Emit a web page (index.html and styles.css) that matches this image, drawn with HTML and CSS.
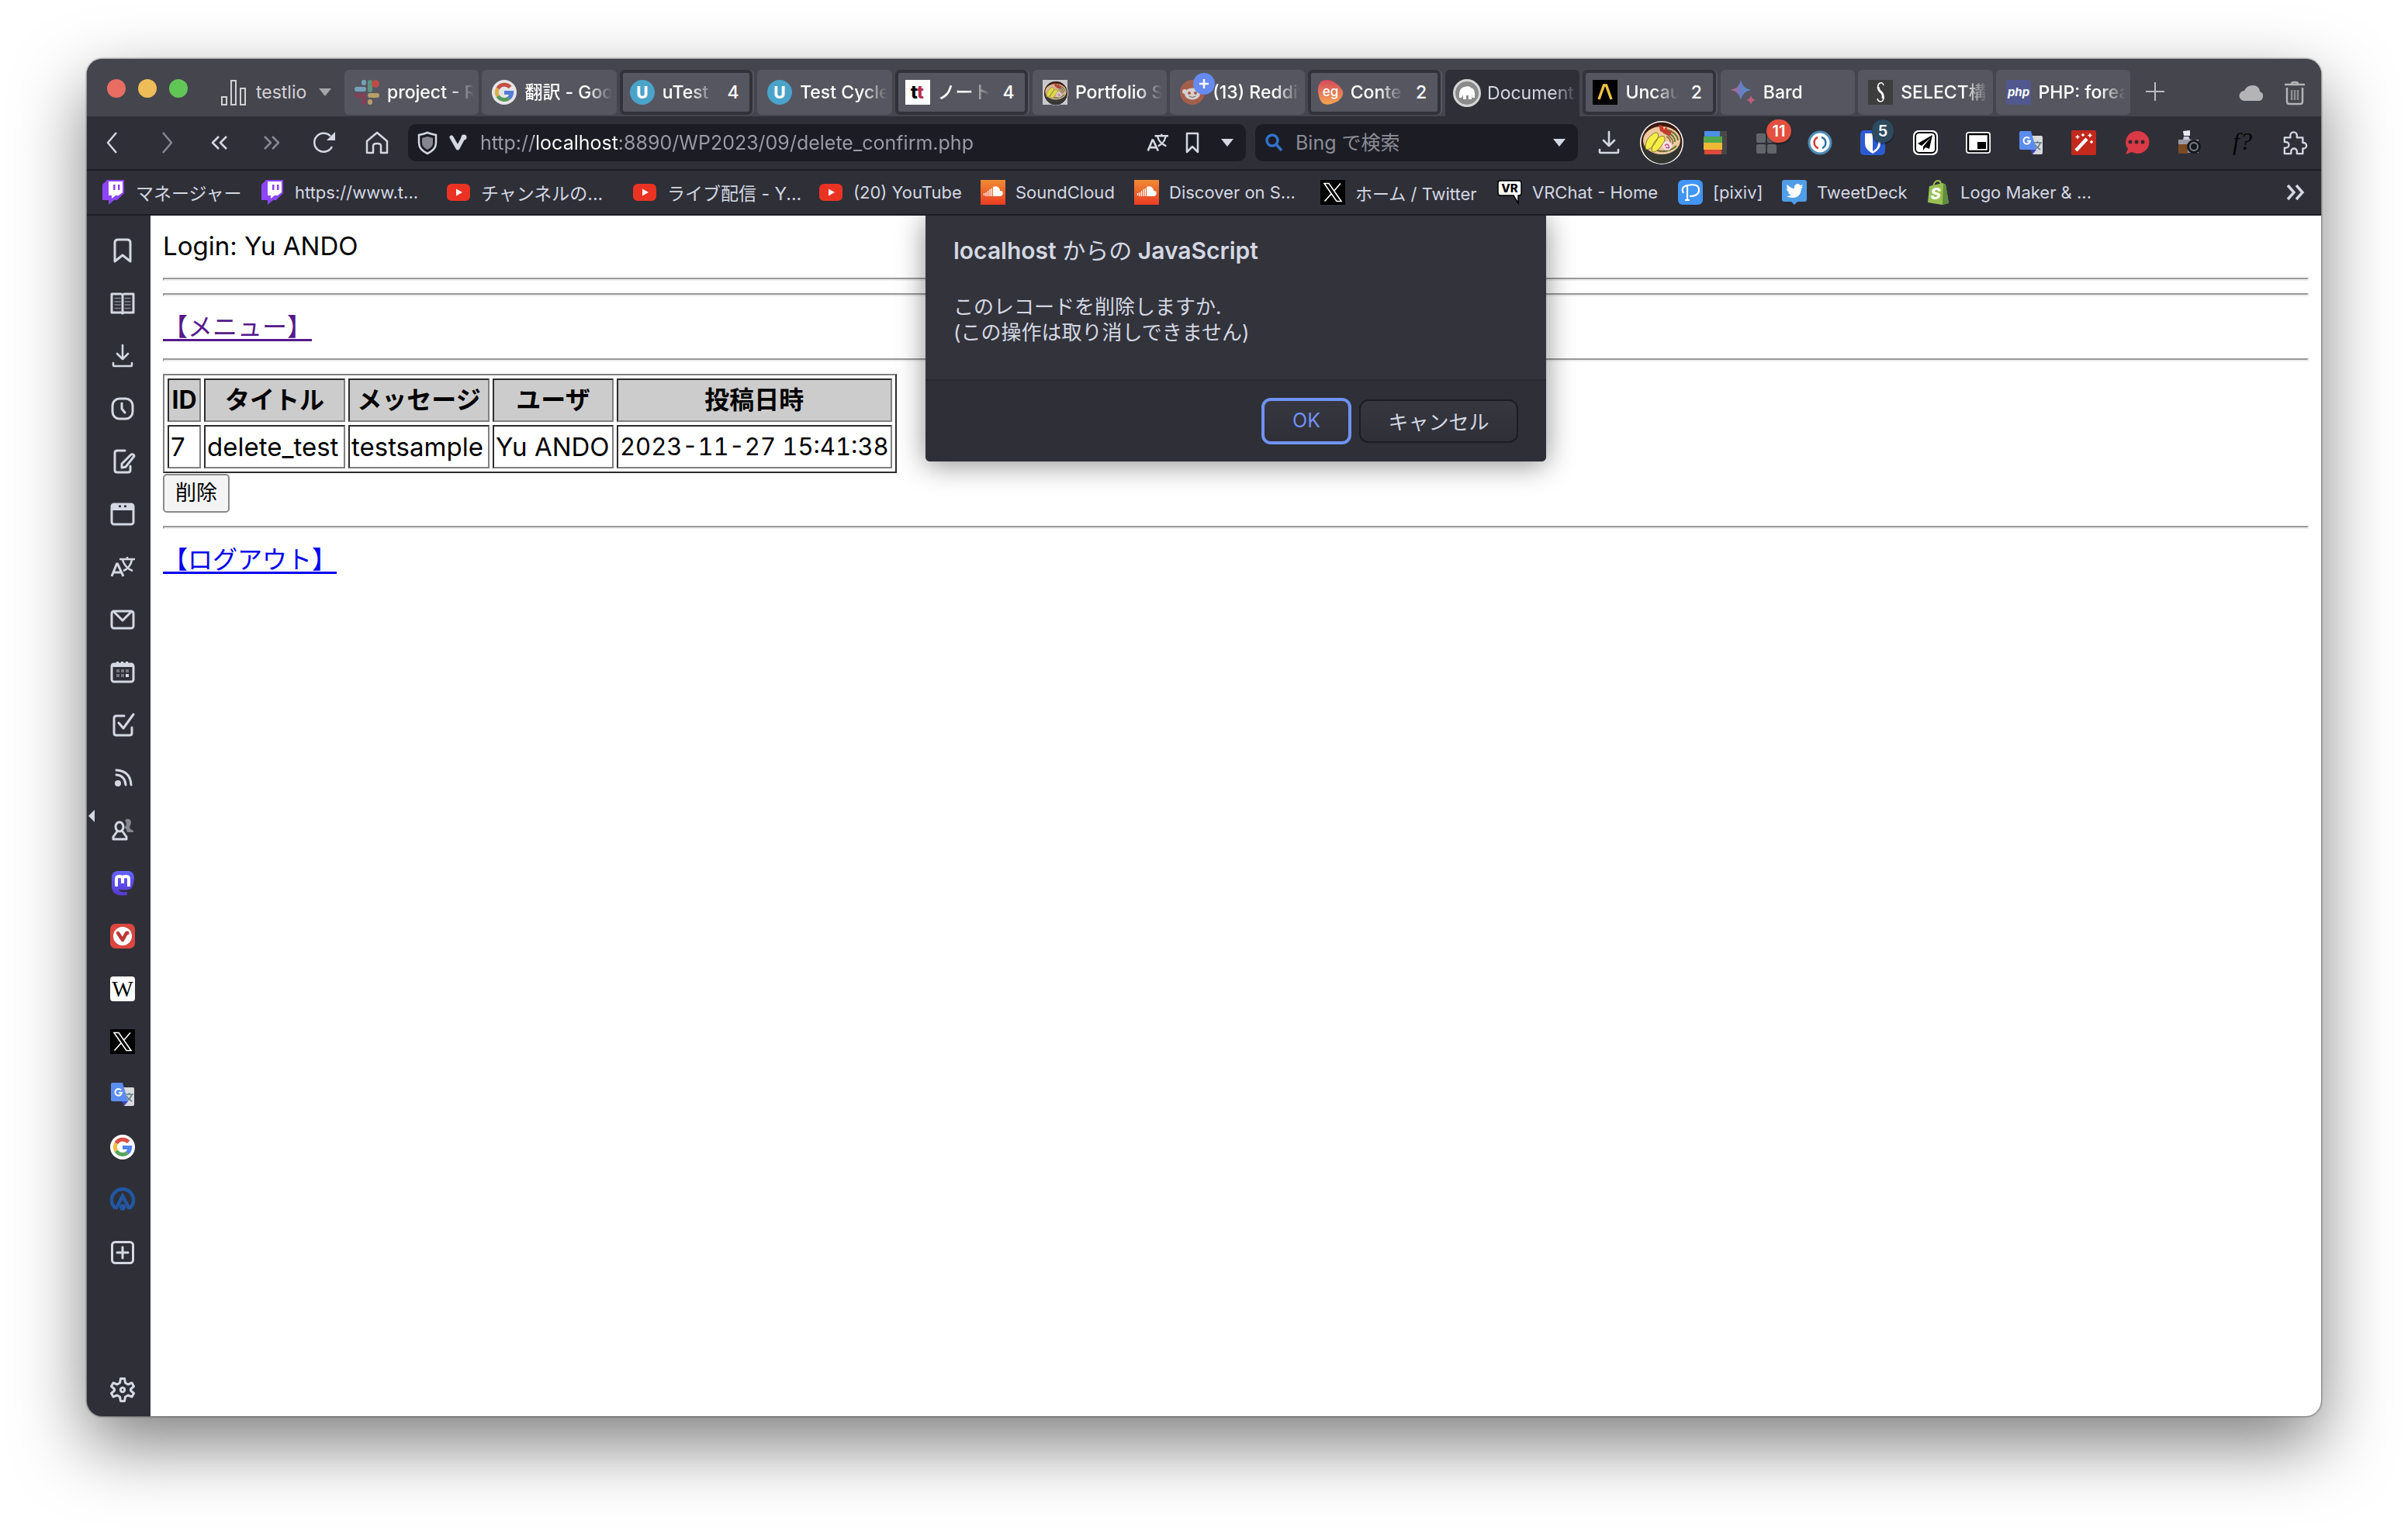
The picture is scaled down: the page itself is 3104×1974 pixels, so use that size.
FILE: index.html
```html
<!DOCTYPE html>
<html lang="ja">
<head>
<meta charset="utf-8">
<title>Document</title>
<link rel="stylesheet" href="styles.css">
</head>
<body>
<svg class="sprite" aria-hidden="true">
  <defs>
    <linearGradient id="g-sc" x1="0" y1="0" x2="0" y2="1"><stop offset="0" stop-color="#f08a34"/><stop offset="1" stop-color="#eb3c22"/></linearGradient>
    <linearGradient id="g-eg" x1="0" y1="0" x2="0" y2="1"><stop offset="0" stop-color="#d44a5c"/><stop offset="1" stop-color="#f3a651"/></linearGradient>
    <linearGradient id="g-bard" x1="0" y1="0" x2="1" y2="0"><stop offset="0" stop-color="#e0627a"/><stop offset=".5" stop-color="#6d84d8"/><stop offset="1" stop-color="#4aa0d8"/></linearGradient>
    <linearGradient id="g-masto" x1="0" y1="0" x2="0" y2="1"><stop offset="0" stop-color="#6364ff"/><stop offset="1" stop-color="#563acc"/></linearGradient>
  </defs>
  <symbol id="twitch" viewBox="0 0 32 32"><path fill="#8c45f7" d="M8 0H30V17L21 26H17L10 32V26H2V6z"/><path fill="#fff" d="M10 2H28V16L23 20H19L14 24V20H10z"/><path fill="#8c45f7" d="M16 6h2.500v7H16zM22 6h2.500v7H22z"/></symbol>
  <symbol id="youtube" viewBox="0 0 32 32"><rect x="1" y="5" width="30" height="22" rx="6" fill="#ea3323"/><path fill="#fff" d="M13 11.500l8 4.500-8 4.500z"/></symbol>
  <symbol id="soundcloud" viewBox="0 0 32 32"><path fill="url(#g-sc)" d="M0 0h32v32H0z"/><path fill="#fff" d="M16 9c5-2 9 1 9 5 5-1 5 7 0 7h-9z"/><path stroke="#fff" stroke-width="1.300" d="M4.500 17v3M7 16v5M9.500 14v7M12 12v9M14.300 11v10"/></symbol>
  <symbol id="xlogo" viewBox="0 0 32 32"><path d="M0 0h32v32H0z"/><path fill="none" stroke="#fff" stroke-width="1.600" d="M5 4.500h6L27 27.500h-6zM26 4.500L17.500 14.300M14.500 17.500L5.500 27.500"/></symbol>
  <symbol id="gtrans" viewBox="0 0 32 32"><path fill="#d9dadc" d="M12 7h17q2 0 2 2v20q0 2-2 2H18z"/><path fill="none" stroke="#617d8b" stroke-width="1.600" d="M19 16h11M24.500 14v2M28 16q-1 5-8 9M21 18q2 4 7 7"/><path fill="#3a46b5" d="M15 25l8 0-5 6z"/><path fill="#5b8def" d="M3 1h13l7 24H3q-2 0-2-2V3q0-2 2-2z"/><path fill="none" stroke="#fff" stroke-width="2" d="M14 10.500a4.300 4.300 0 1 0 1 3.200h-4"/></symbol>
  <symbol id="google" viewBox="0 0 32 32"><circle cx="16" cy="16" r="16" fill="#fff"/><g fill="none" stroke-width="5"><path stroke="#d94f41" d="M23.500 9.500A9.700 9.700 0 0 0 7.800 11"/><path stroke="#f3bd42" d="M7.800 11A9.700 9.700 0 0 0 7.800 21"/><path stroke="#58a55c" d="M7.800 21A9.700 9.700 0 0 0 22 23.500"/><path stroke="#5383ec" d="M22 23.500A9.700 9.700 0 0 0 25.600 16.500H16"/></g></symbol>
  <symbol id="utest" viewBox="0 0 32 32"><circle cx="16" cy="16" r="16" fill="#4aa3c9"/><text x="16" y="23.500" font-size="21" font-weight="800" fill="#fff" text-anchor="middle" class="ui">U</text></symbol>
  <symbol id="bowl" viewBox="0 0 56 56"><circle cx="28" cy="28" r="28" fill="#fff"/><circle cx="28" cy="28" r="26.500" fill="#3b1a10"/><path fill="#333531" d="M3 30q25 24 50 0a25 25 0 0 1-50 0z"/><ellipse cx="28" cy="25" rx="24" ry="18" fill="#eec9a0"/><path fill="none" stroke="#5f7433" stroke-width="2" d="M34 11q14 4 15 14M36 15q9 4 9 12M22 38q14 4 25-6"/><path fill="none" stroke="#8b6a3a" stroke-width="1.500" d="M30 15q14 6 12 15M18 37q12 4 20-1M34 20q6 3 5 9"/><path fill="#f4ee48" stroke="#8f7c22" d="M7 34q0-10 8-16 4-4 7-3 4 3-1 11-4 8-11 11-3 0-3-3zM15 38q1-10 8-16 5-4 8-2 3 3-2 10-5 8-10 10-4 0-4-2z"/><path fill="#c93a2c" d="M24 5l5 1 2 5 3-4 2 6 5-1-2 7-7-3-6-3z"/><circle cx="35" cy="32" r="6" fill="#f6e3e9"/><path d="M32 32q3-4 5 0t-4 2" fill="none" stroke="#c0487c" stroke-width="1.500"/></symbol>
  <symbol id="translate" viewBox="0 0 32 32"><path fill="none" stroke="currentColor" stroke-width="3" d="M2 28L8.500 12h1L17 28M5 23h9"/><path fill="none" stroke="currentColor" stroke-width="2.600" d="M12 6h20M22 3v3M16 7q3 10 13 14M28 7q-2 10-11 14"/></symbol>
  <symbol id="download" viewBox="0 0 32 32"><path fill="none" stroke="currentColor" stroke-width="2.600" stroke-linecap="round" stroke-linejoin="round" d="M16 2v18M9 13l7 7 7-7M4 25v3q0 1 1 1h22q1 0 1-1v-3"/></symbol>
  <symbol id="caret" viewBox="0 0 16 10"><path fill="currentColor" d="M0 0h16L8 10z"/></symbol>
</svg>

<div class="window">
  <header class="tabbar">
    <div class="lights">
      <button class="light red" aria-label="閉じる"></button>
      <button class="light yellow" aria-label="最小化"></button>
      <button class="light green" aria-label="拡大"></button>
    </div>
    <button class="workspace">
      <svg viewBox="0 0 34 34"><path fill="none" stroke="currentColor" stroke-width="2" d="M2 23h6v10H2zM14 2h6v31h-6zM26 12h6v21h-6z"/></svg>
      <span>testlio</span>
      <svg class="caret"><use href="#caret"/></svg>
    </button>
    <nav class="tabs" aria-label="タブ">
      <button class="tab faded"><svg viewBox="0 0 32 32"><g stroke-width="6" stroke-linecap="round"><path stroke="#7fb0c8" d="M3 12h9M12 3v1"/><path stroke="#5f9d87" d="M20 3v10"/><path stroke="#8e3a55" d="M3 20h2M12 20v9"/><path stroke="#c8ab6a" d="M20 20h9M20 28v1"/></g><circle cx="27" cy="5" r="5" fill="#cf4a42"/></svg><span>project - R</span></button>
      <button class="tab faded"><svg><use href="#google"/></svg><span>翻訳 - Goog</span></button>
      <button class="tab stack"><svg><use href="#utest"/></svg><span>uTest</span><b>4</b></button>
      <button class="tab"><svg><use href="#utest"/></svg><span>Test Cycles</span></button>
      <button class="tab stack"><svg viewBox="0 0 32 32"><path fill="#fff" d="M0 0h32v32H0z"/><text x="7" y="24" font-size="23" font-weight="800" class="ui">t<tspan fill="#b5324a">t</tspan></text></svg><span>ノート</span><b>4</b></button>
      <button class="tab faded"><svg viewBox="0 0 32 32"><path fill="#ddd" d="M0 0h32v32H0z"/><svg x="1" y="1" width="30" height="30"><use href="#bowl"/></svg></svg><span>Portfolio Si</span></button>
      <button class="tab"><svg viewBox="0 0 32 32"><circle cx="16" cy="16" r="16" fill="#a45f4c"/><ellipse cx="16" cy="18" rx="10" ry="7.500" fill="#d6d0ce"/><circle cx="6" cy="15" r="3" fill="#d6d0ce"/><circle cx="26" cy="15" r="3" fill="#d6d0ce"/><circle cx="12" cy="17" r="2" fill="#a45f4c"/><circle cx="20" cy="17" r="2" fill="#a45f4c"/><path d="M12 21q4 3 8 0" stroke="#665" fill="none"/></svg><i class="plus"><svg viewBox="0 0 28 28"><path stroke="#fff" stroke-width="2.500" d="M14 8v12M8 14h12"/></svg></i><span>(13) Reddit</span></button>
      <button class="tab stack"><svg viewBox="0 0 32 32"><path fill="url(#g-eg)" d="M4 2Q14-3 24 5t8 14q-3 9-15 12T2 24Q-3 9 4 2z"/><text x="16" y="21" font-size="17" fill="#fff" text-anchor="middle" class="ui">eg</text></svg><span>Conten</span><b>2</b></button>
      <button class="tab active"><svg viewBox="0 0 36 36"><circle cx="18" cy="18" r="16.500" fill="#8b8b8b" stroke="#d5d5d5" stroke-width="3"/><path fill="#fff" d="M8 24q-1-13 7-14 6-2 8 1 6 1 5 13h-3v-5l-1 7h-4v-5h-3v5h-4v-6l-2 4z"/></svg><span>Document</span></button>
      <button class="tab stack"><svg viewBox="0 0 32 32"><path d="M0 0h32v32H0z"/><path fill="none" stroke="#efc241" stroke-width="3.500" d="M8 25l6.500-18h3L24 25"/></svg><span>Uncaug</span><b>2</b></button>
      <button class="tab faded"><svg viewBox="0 0 32 32"><path fill="url(#g-bard)" d="M13 0q2 11 13 13-11 2-13 13Q11 15 0 13 11 11 13 0z"/><path fill="#d0637b" d="M26 20q1 5 6 6-5 1-6 6-1-5-6-6 5-1 6-6z"/></svg><span>Bard</span></button>
      <button class="tab"><svg viewBox="0 0 32 32"><path fill="#3d3d3d" d="M0 0h32v32H0z"/><path fill="none" stroke="#fff" stroke-width="1.500" d="M20 7q-1-4-4-3-4 1-3 6"/><path fill="none" stroke="#fff" stroke-width="3" d="M13 9q0 4 4 7 3 3 2 8"/><path fill="none" stroke="#fff" stroke-width="1.500" d="M20 22q0 6-4 6-3 0-4-4"/></svg><span>SELECT構文</span></button>
      <button class="tab"><svg viewBox="0 0 32 32"><rect width="32" height="32" rx="4" fill="#50588f"/><text x="16" y="21" font-size="15" font-weight="700" font-style="italic" fill="#fff" text-anchor="middle" class="ui">php</text></svg><span>PHP: foreach</span></button>
    </nav>
    <button class="newtab" aria-label="新しいタブ"><svg viewBox="0 0 24 24"><path stroke="currentColor" stroke-width="2" d="M12 0v24M0 12h24"/></svg></button>
    <div class="tabtools">
      <button aria-label="同期"><svg viewBox="0 0 32 32"><path fill="currentColor" d="M7 26a6.500 6.500 0 0 1 0-13Q10 6 18 6q8 0 9 8 5 2 4 7t-5 5z"/></svg></button>
      <button aria-label="閉じたタブ"><svg viewBox="0 0 32 32"><path fill="none" stroke="currentColor" stroke-width="2.500" d="M3 5h26M12 4q0-2 4-2t4 2M6 9v18q0 3 3 3h14q3 0 3-3V9"/><path stroke="#8b8b90" stroke-width="2.500" d="M12 12v13M16 12v13M20 12v13"/></svg></button>
    </div>
  </header>

  <div class="toolbar">
    <div class="navbtns">
      <button aria-label="戻る"><svg viewBox="0 0 32 32"><path class="ln" d="M20 3L9 16l11 13"/></svg></button>
      <button class="dim" aria-label="進む"><svg viewBox="0 0 32 32"><path class="ln" d="M12 3l11 13-11 13"/></svg></button>
      <button aria-label="巻き戻し"><svg viewBox="0 0 32 32"><path class="ln" d="M16 8l-8 8 8 8M26 8l-8 8 8 8"/></svg></button>
      <button class="dim" aria-label="早送り"><svg viewBox="0 0 32 32"><path class="ln" d="M7 8l8 8-8 8M17 8l8 8-8 8"/></svg></button>
      <button aria-label="再読み込み"><svg viewBox="0 0 32 32"><path class="ln" d="M26 21A12 12 0 1 1 24 7.500"/><path fill="currentColor" d="M30 2v11H19z"/></svg></button>
      <button aria-label="ホーム"><svg viewBox="0 0 32 32"><path class="ln" d="M3 14L16 3l13 11v15h-8v-9q0-3-5-3t-5 3v9H3z"/></svg></button>
    </div>
    <div class="field address">
      <button aria-label="サイト情報"><svg viewBox="0 0 32 32"><path fill="none" stroke="currentColor" stroke-width="2.500" d="M16 3q5 2 11 3v10q0 9-11 14Q5 25 5 16V6q6-1 11-3z"/><path fill="#85878f" d="M16 8l7 2v6q0 6-7 9-7-3-7-9v-6z"/></svg></button>
      <button class="vivaldi" aria-label="Vivaldi"><svg viewBox="0 0 32 32"><path fill="none" stroke="currentColor" stroke-width="5" stroke-linecap="round" stroke-linejoin="round" d="M8 9l8 14 7-13"/><circle cx="24" cy="9" r="3.500" fill="currentColor"/></svg></button>
      <input class="url" type="text" aria-label="アドレス" value="http://localhost:8890/WP2023/09/delete_confirm.php">
      <button aria-label="翻訳"><svg class="small"><use href="#translate"/></svg></button>
      <button aria-label="ブックマーク"><svg viewBox="0 0 32 32"><path class="ln" d="M9 4h14v24l-7-7-7 7z"/></svg></button>
      <button aria-label="履歴"><svg class="caret"><use href="#caret"/></svg></button>
    </div>
    <div class="field search">
      <svg viewBox="0 0 32 32"><g fill="none" stroke="#3272c9" stroke-width="3.500"><circle cx="14" cy="13" r="7"/><path d="M19 18l7 8"/></g></svg>
      <input type="text" aria-label="検索" placeholder="Bing で検索">
      <button aria-label="検索エンジン"><svg class="caret"><use href="#caret"/></svg></button>
    </div>
    <div class="extensions">
      <button aria-label="ダウンロード"><svg><use href="#download"/></svg></button>
      <button aria-label="プロファイル"><svg class="avatar"><use href="#bowl"/></svg></button>
      <button aria-label="積み重ね"><svg viewBox="0 0 32 32"><path fill="#484848" d="M20 1h12v30H20z"/><path fill="#4a8fe8" d="M3 1h20v8H3z"/><path fill="#55a648" d="M2 8h24v9H2z"/><path fill="#edb937" d="M2 16h24v9H2z"/><path fill="#dc4a3a" d="M3 25h22v6H3z"/></svg></button>
      <button aria-label="タイル"><svg viewBox="0 0 32 32"><g fill="#626569"><rect x="2" y="4" width="12" height="12" rx="2"/><rect x="16" y="4" width="12" height="12" rx="2"/><rect x="2" y="18" width="12" height="12" rx="2"/><rect x="16" y="18" width="12" height="12" rx="2"/></g></svg><b class="badge hot">11</b></button>
      <button aria-label="同期状態"><svg viewBox="0 0 32 32"><circle cx="16" cy="16" r="14" fill="#fff" stroke="#4b8bb5" stroke-width="3"/><g fill="none" stroke-width="2.500"><path stroke="#d0453b" d="M14 23A7.500 7.500 0 0 1 13 9"/><path stroke="#2f6fa5" d="M18 9a7.500 7.500 0 0 1 1 14"/></g></svg></button>
      <button aria-label="Bitwarden"><svg viewBox="0 0 32 32"><rect width="32" height="32" rx="5" fill="#2c5bd4"/><path fill="#fff" d="M6 4h20v13q0 8-10 13Q6 25 6 17z"/><path fill="#2c5bd4" d="M16 7h7v10q0 6-7 10z"/></svg><b class="badge cool">5</b></button>
      <button aria-label="送信"><svg viewBox="0 0 32 32"><rect width="32" height="32" rx="7" fill="#fff"/><rect x="3" y="3" width="26" height="26" rx="5" fill="none" stroke="#000" stroke-width="2"/><path d="M25 6L6 17l5 3L23 9 13 21v5l3-4 5 2z"/></svg></button>
      <button aria-label="ピクチャーインピクチャー"><svg viewBox="0 0 32 32"><rect y="2" width="32" height="28" rx="4" fill="#fff"/><rect x="3" y="5" width="26" height="22" rx="1" fill="#fff" stroke="#000" stroke-width="2.500"/><path d="M15 15h11v9H15z"/></svg></button>
      <button aria-label="Google 翻訳"><svg><use href="#gtrans"/></svg></button>
      <button aria-label="ワンド"><svg viewBox="0 0 32 32"><rect width="32" height="32" rx="2" fill="#c3291c"/><path stroke="#fff" stroke-width="4.500" d="M6 26L20 11"/><path stroke="#fff" stroke-width="1.500" d="M8 6v5M5.500 8.500h5M15 4v4M13 6h4M24 4v5M21.500 6.500h5M26 13v4M24 15h4"/></svg></button>
      <button aria-label="チャット"><svg viewBox="0 0 32 32"><path fill="#d93a45" d="M16 1a15 14.500 0 1 1-6 27l-8 3 3-7A15 14.500 0 0 1 16 1z"/><g fill="#38262c"><circle cx="8" cy="15" r="2.500"/><circle cx="16" cy="15" r="2.500"/><circle cx="24" cy="15" r="2.500"/></g></svg></button>
      <button aria-label="カメラ"><svg viewBox="0 0 32 32"><path fill="#e8eaf4" d="M8 1l9-1v7H9z"/><path fill="#9a9aa4" d="M2 12h26v17H2z"/><path fill="#7a4a24" d="M2 18h12v12H2z"/><path fill="#c9cbe0" d="M9 8h6l2 4H8z"/><circle cx="22" cy="21" r="9" fill="#16181c"/><circle cx="22" cy="21" r="5" fill="none" stroke="#77808c" stroke-width="2"/></svg></button>
      <button aria-label="フォント"><svg viewBox="0 0 32 32"><text x="4" y="25" font-size="32" font-style="italic" fill="#060607" class="serif">f?</text></svg></button>
      <button aria-label="拡張機能"><svg viewBox="0 0 34 34"><path class="ln" d="M3 10h8V7a4.500 4.500 0 0 1 9 0v3h8v7h1a4 4 0 0 1 0 8h-1v7h-8v-3a4 4 0 0 0-8 0v3H3v-8h2a4 4 0 0 0 0-8H3z"/></svg></button>
    </div>
  </div>

  <nav class="bookmarks" aria-label="ブックマークバー">
    <a class="kana" href="#"><svg><use href="#twitch"/></svg><span>マネージャー</span></a>
    <a href="#"><svg><use href="#twitch"/></svg><span>https://www.t...</span></a>
    <a class="kana" href="#"><svg><use href="#youtube"/></svg><span>チャンネルの...</span></a>
    <a class="kana" href="#"><svg><use href="#youtube"/></svg><span>ライブ配信 - Y...</span></a>
    <a href="#"><svg><use href="#youtube"/></svg><span>(20) YouTube</span></a>
    <a href="#"><svg><use href="#soundcloud"/></svg><span>SoundCloud</span></a>
    <a href="#"><svg><use href="#soundcloud"/></svg><span>Discover on S...</span></a>
    <a href="#"><svg><use href="#xlogo"/></svg><span>ホーム / Twitter</span></a>
    <a href="#"><svg viewBox="0 0 32 32"><path fill="#fff" stroke="#000" stroke-width="1.500" d="M4 1h24q3 0 3 3v13q0 3-3 3h-1v10l-6-10H4q-3 0-3-3V4q0-3 3-3z"/><text x="16" y="16" font-size="15" font-weight="800" text-anchor="middle" class="ui">VR</text></svg><span>VRChat - Home</span></a>
    <a href="#"><svg viewBox="0 0 32 32"><rect width="32" height="32" rx="6" fill="#4195f5"/><path fill="none" stroke="#fff" stroke-width="2.200" d="M7 17Q3 9 12 7q15-3 15 6 0 8-12 8M12 7v19M9 26h6"/></svg><span>[pixiv]</span></a>
    <a href="#"><svg viewBox="0 0 32 32"><path fill="#509ee8" d="M3 0h26q3 0 3 3v22q0 3-3 3h-9l-4 4-4-4H3q-3 0-3-3V3q0-3 3-3z"/><path fill="#fff" d="M7 6q4 5 9 5-1-5 4-6 2 0 4 2l3-1-2 3 2 0-2 2q-1 12-11 12-5 0-8-2 4 0 6-2-3 0-4-3h2q-4-1-4-5l2 1q-3-3-1-6z"/></svg><span>TweetDeck</span></a>
    <a href="#"><svg viewBox="0 0 32 32"><path fill="#9abf52" d="M5 8l17-4 4 2 4 24-9 2-18-3z"/><path fill="#5f8d40" d="M23 5l3 2 4 23-8 2z"/><path fill="none" stroke="#9abf52" stroke-width="2" d="M10 8q2-8 7-7 3 1 3 5"/><text x="13" y="25" font-size="20" font-weight="800" font-style="italic" fill="#fff" text-anchor="middle" class="ui">S</text></svg><span>Logo Maker &amp; ...</span></a>
    <button class="more" aria-label="さらに表示"><svg viewBox="0 0 32 32"><path fill="none" stroke="currentColor" stroke-width="3.500" d="M6 7l8 9-8 9M17 7l8 9-8 9"/></svg></button>
  </nav>

  <div class="main">
    <aside class="panelbar">
      <button aria-label="ブックマーク"><svg viewBox="0 0 32 32"><path class="th" d="M6 30V6q0-4 4-4h12q4 0 4 4v24l-10-8z"/></svg></button>
      <button aria-label="リーディングリスト"><svg viewBox="0 0 32 32"><path class="th" d="M2 4h12l2 1 2-1h12v24H18l-2 1-2-1H2zM16 5v24"/><path stroke="#85878f" stroke-width="1.600" d="M5.500 9.500h8M5.500 14h8M5.500 18h8M5.500 22.500h8M18.500 9.500h8M18.500 14h8M18.500 18h8M18.500 22.500h8"/></svg></button>
      <button aria-label="ダウンロード"><svg><use href="#download"/></svg></button>
      <button aria-label="履歴"><svg viewBox="0 0 32 32"><rect class="th" x="3" y="3" width="26" height="26" rx="9"/><path class="th" d="M15 9v7l4 5"/></svg></button>
      <button aria-label="メモ"><svg viewBox="0 0 32 32"><path class="th" d="M19 2H9Q6 2 6 5v22q0 3 3 3h14q3 0 3-3v-5M15 24v-5L27 7q3-1 4 2L20 23z"/></svg></button>
      <button aria-label="ウィンドウ"><svg viewBox="0 0 32 32"><rect class="th" x="2" y="3" width="28" height="26" rx="3"/><path fill="currentColor" d="M2 4h9v3h3V4h4v3h3V4h9v7H2z"/></svg></button>
      <button aria-label="翻訳"><svg><use href="#translate"/></svg></button>
      <button aria-label="メール"><svg viewBox="0 0 32 32"><rect class="th" x="2" y="5" width="28" height="22" rx="3"/><path class="th" d="M5 6l11 11L27 6"/></svg></button>
      <button aria-label="カレンダー"><svg viewBox="0 0 32 32"><rect class="th" x="2" y="5" width="28" height="23" rx="3"/><path fill="currentColor" d="M2 5h28v4H2zM8 2h3v3H8zM14 2h3v3h-3zM20 2h3v3h-3z"/><path fill="#73757e" d="M8 12h4v4H8zM14 12h4v4h-4zM20 12h4v4h-4zM8 18h4v4H8zM14 18h4v4h-4z"/><path fill="currentColor" d="M20 18h4v4h-4z"/></svg></button>
      <button aria-label="タスク"><svg viewBox="0 0 32 32"><path class="th" d="M18 4H8Q5 4 5 7v19q0 3 3 3h17q3 0 3-3v-7M11 13l6 7L30 2"/></svg></button>
      <button aria-label="フィード"><svg viewBox="0 0 32 32"><circle cx="10" cy="23" r="4" fill="currentColor"/><path class="th" d="M8 12q11 1 12 13M8 6q18 1 19 19"/></svg></button>
      <button aria-label="連絡先"><svg viewBox="0 0 32 32"><path fill="#85878f" d="M19 2q7-3 8 3 0 3-2 6 0 3 5 5v2h-8q-1-5-4-6 3-2 3-5z"/><ellipse class="th" cx="12" cy="11" rx="5" ry="6"/><path class="th" d="M9 17L4 24v3h17v-3l-5-7"/></svg></button>
      <button aria-label="Mastodon"><svg viewBox="0 0 32 32"><path fill="url(#g-masto)" d="M9 0h15q7 1 7 9-1 14-7 15-7 1-13 0 1 4 11 3v4Q4 34 2 22V8Q2 1 9 0z"/><path fill="none" stroke="#fff" stroke-width="4" d="M8 20V10q0-3 4-3t4 3v6M16 10q0-3 4-3t4 3v10"/></svg></button>
      <button aria-label="Vivaldi"><svg viewBox="0 0 32 32"><rect width="32" height="32" rx="7" fill="#d9473f"/><circle cx="16" cy="16" r="12" fill="#fff"/><path fill="none" stroke="#bb3a36" stroke-width="4.500" stroke-linecap="round" stroke-linejoin="round" d="M10 12l6 9 5-9"/><circle cx="22" cy="12" r="2.500" fill="#bb3a36"/></svg></button>
      <button aria-label="Wikipedia"><svg viewBox="0 0 32 32"><rect width="32" height="32" rx="4" fill="#fff"/><text x="16" y="26" font-size="29" text-anchor="middle" class="serif">W</text></svg></button>
      <button aria-label="X"><svg><use href="#xlogo"/></svg></button>
      <button aria-label="Google 翻訳"><svg><use href="#gtrans"/></svg></button>
      <button aria-label="Google"><svg><use href="#google"/></svg></button>
      <button aria-label="ウェブパネル"><svg viewBox="0 0 32 32"><g fill="none" stroke="#2257a0" stroke-width="4.500"><path d="M7 27A14 14 0 1 1 25 27"/><path d="M7 28l9-17 9 17"/></g><circle cx="16" cy="25.500" r="4.200" fill="#2257a0"/></svg></button>
      <button aria-label="追加"><svg viewBox="0 0 32 32"><rect class="th" x="2.500" y="2.500" width="27" height="27" rx="4"/><path class="th" d="M16 9v14M9 16h14"/></svg></button>
      <button class="settings" aria-label="設定"><svg viewBox="0 0 32 32"><path class="th" d="M13.500 1.500h5l1 5.500 3.500 2 5-2 2.500 4.500-4 3.500v2l4 3.500-2.500 4.500-5-2-3.500 2-1 5.500h-5l-1-5.500-3.500-2-5 2L1.500 20.500l4-3.500v-2l-4-3.500L4 7l5 2 3.500-2z"/><circle class="th" cx="16" cy="16" r="2.700"/></svg></button>
      <i class="collapse"></i>
    </aside>

    <main class="page">
      <p>Login: Yu ANDO</p>
      <hr>
      <hr>
      <p><a class="visited" href="#">【メニュー】</a></p>
      <hr>
      <table>
        <colgroup><col class="c-id"><col class="c-text"><col class="c-text"><col class="c-user"><col class="c-date"></colgroup>
        <thead><tr><th>ID</th><th>タイトル</th><th>メッセージ</th><th>ユーザ</th><th>投稿日時</th></tr></thead>
        <tbody><tr><td>7</td><td>delete_test</td><td>testsample</td><td>Yu ANDO</td><td class="date">2023-11-27 15:41:38</td></tr></tbody>
      </table>
      <form><button type="button" class="delete">削除</button></form>
      <hr>
      <p><a href="#">【ログアウト】</a></p>
    </main>

    <section class="dialog" role="alertdialog" aria-labelledby="dlg-title">
      <div class="dialog-body">
        <h1 id="dlg-title">localhost <span>からの</span> JavaScript</h1>
        <p>このレコードを削除しますか.<br>(この操作は取り消しできません)</p>
      </div>
      <footer>
        <button class="ok">OK</button>
        <button>キャンセル</button>
      </footer>
    </section>
  </div>
</div>
</body>
</html>
```
FILE: styles.css
```css
* { box-sizing: border-box; }

:root {
  --ui: Inter, "Noto Sans CJK JP", sans-serif;
  --chrome: #2f2f38;
  --line: #1c1c25;
  --fg: #d3d8e2;
}

body {
  margin: 0;
  min-height: 100vh;
  padding: 76px 112px 148px;
  display: flex;
  background: #fff;
  font-family: var(--ui);
}

button {
  margin: 0;
  padding: 0;
  border: 0;
  background: none;
  color: inherit;
  font: inherit;
  display: flex;
  align-items: center;
  justify-content: center;
  flex: none;
}

svg { width: 32px; height: 32px; flex: none; display: block; overflow: visible; }
.sprite { position: absolute; width: 0; height: 0; }
.ui { font-family: var(--ui); }
.serif { font-family: "Liberation Serif", serif; }
.ln { fill: none; stroke: currentColor; stroke-width: 2.5; stroke-linejoin: round; }
.th { fill: none; stroke: currentColor; stroke-width: 3; stroke-linejoin: round; stroke-linecap: round; }
svg.caret { width: 16px; height: 10px; }
svg.small { width: 28px; height: 28px; }

.window {
  flex: 1;
  min-width: 0;
  display: flex;
  flex-direction: column;
  border-radius: 20px;
  overflow: hidden;
  background: var(--chrome);
  color: var(--fg);
  box-shadow: 0 0 2px 1px rgba(0, 0, 0, .4), 0 36px 90px rgba(0, 0, 0, .5);
}

/* tab bar */
.tabbar {
  height: 74px;
  display: flex;
  align-items: center;
  background: #45454e;
  padding-left: 26px;
}
.lights { display: flex; gap: 16px; width: 146px; align-self: flex-start; margin-top: 26px; }
.light { width: 24px; height: 24px; border-radius: 50%; }
.red { background: #e96d63; }
.yellow { background: #eebd57; }
.green { background: #62c656; }
.workspace {
  width: 160px;
  height: 74px;
  justify-content: flex-start;
  gap: 12px;
  padding-top: 12px;
  font-size: 23px;
  color: #d2d2d4;
}
.workspace svg { width: 34px; height: 34px; }
.workspace svg.caret { color: #a5a5aa; margin-left: 4px; width: 16px; height: 10px; }
.tabs {
  flex: 1;
  min-width: 0;
  display: grid;
  grid-auto-flow: column;
  grid-auto-columns: minmax(0, 1fr);
  align-items: start;
  gap: 4px;
  align-self: stretch;
  padding-top: 14px;
}
.tab {
  height: 58px;
  padding: 0 6px 0 13px;
  justify-content: flex-start;
  gap: 10px;
  border-radius: 6px;
  background: #565660;
  color: #fff;
  font-size: 23px;
  font-weight: 500;
  white-space: nowrap;
  position: relative;
}
.tab span {
  flex: 1;
  min-width: 0;
  overflow: hidden;
  text-align: left;
  line-height: 34px;
  mask-image: linear-gradient(90deg, #000 calc(100% - 32px), transparent);
}
.tab.faded > svg { opacity: .85; }
.tab b { width: 26px; font-weight: 500; text-align: center; }
.tab.stack { border: 4px solid #32323b; padding: 0 8px 0 9px; margin-right: 2px; box-shadow: 2px 0 0 #565660; }
.tab.active { background: var(--chrome); color: var(--fg); height: 60px; padding: 0 2px 0 10px; gap: 8px; border-radius: 6px 6px 0 0; font-weight: 400; }
.tab.active svg { width: 36px; height: 36px; }
.plus {
  position: absolute;
  left: 30px;
  top: 4px;
  width: 28px;
  height: 28px;
  border-radius: 50%;
  background: #668af0;
}
.plus svg { width: 28px; height: 28px; }
.newtab { width: 64px; height: 58px; color: #bcbcc0; padding-top: 10px; }
.newtab svg { width: 24px; height: 24px; }
.tabtools { display: flex; gap: 24px; width: 182px; justify-content: flex-end; padding: 14px 18px 0 0; color: #b4b4b7; }

/* toolbar */
.toolbar {
  height: 70px;
  display: flex;
  align-items: center;
  border-bottom: 2px solid var(--line);
}
.navbtns { display: flex; width: 408px; }
.navbtns button { width: 68px; height: 48px; }
.navbtns .dim { color: #868891; }
.field {
  height: 48px;
  display: flex;
  align-items: center;
  background: var(--line);
  border-radius: 10px;
  margin-left: 6px;
}
.field input {
  flex: 1;
  min-width: 0;
  border: 0;
  padding: 0;
  outline: 0;
  background: none;
  color: var(--fg);
  font: 400 25px/36px var(--ui);
}
.address { flex: 1; padding: 0 2px; }
.address button { width: 45px; height: 48px; }
.address .vivaldi { width: 34px; }
.field .url {
  margin-left: 12px;
  color: transparent;
  background: linear-gradient(90deg, #9a9da6 69px, #fff 69px 177px, #9a9da6 177px);
  background-clip: text;
}
.search { width: 416px; margin-left: 12px; padding: 0 2px 0 8px; }
.search input { padding-left: 12px; }
.search input::placeholder { color: #8b8d96; opacity: 1; }
.search button { width: 44px; height: 48px; }
.extensions { display: flex; width: 958px; padding-left: 6px; }
.extensions button { width: 68px; height: 56px; position: relative; }
.extensions svg.avatar { width: 56px; height: 56px; }
.badge {
  position: absolute;
  left: 33px;
  top: -2px;
  width: 32px;
  height: 30px;
  border-radius: 15px;
  color: #fff;
  font: 600 20px/30px var(--ui);
  text-align: center;
  box-shadow: 0 2px 2px rgba(0, 0, 0, .4);
}
.hot { background: #e2513f; }
.cool { background: #2e4a5e; width: 28px; }

/* bookmark bar */
.bookmarks {
  height: 58px;
  display: grid;
  grid-template-columns: 205px 240px 240px 240px 209px 198px 240px 228px 233px 134px 185px 1fr auto;
  align-items: center;
  padding: 0 17px 0 18px;
  border-bottom: 2px solid var(--line);
  font-size: 22px;
}
.bookmarks a { display: flex; align-items: center; gap: 13px; color: inherit; text-decoration: none; white-space: nowrap; }
.bookmarks .kana { font-size: 23px; }

/* panels and page */
.main { flex: 1; display: flex; position: relative; }
.panelbar {
  width: 82px;
  padding: 11px 0 0 12px;
  display: flex;
  flex-direction: column;
  position: relative;
}
.panelbar button { width: 68px; height: 68px; }
.panelbar .settings { margin-top: auto; }
.collapse {
  position: absolute;
  left: 2px;
  top: 766px;
  border: solid transparent;
  border-width: 8px 8px 8px 0;
  border-right-color: var(--fg);
}
.page {
  flex: 1;
  background: #fff;
  color: #000;
  padding: 16px;
  font: 400 33px/46px Inter, "Noto Sans CJK JP", sans-serif;
}
.page p { margin: 0; height: 48px; }
.page hr { margin: 16px 0; border: 2px solid; height: 4px; border-color: #9a9a9a #eee #eee #9a9a9a; }
.page a { font-size: 32px; color: #0000ee; text-decoration-thickness: 3px; text-underline-offset: 4px; }
.page a.visited { color: #551a8b; }
.page table {
  border: 2px solid;
  border-color: #808080 #2c2c2c #2c2c2c #808080;
  border-spacing: 4px;
}
.page th, .page td {
  border: 2px solid;
  border-color: #2c2c2c #808080 #808080 #2c2c2c;
  padding: 2px;
  height: 56px;
  white-space: nowrap;
}
.page th { background: #ccc; font-size: 32px; }
.page .date { font-size: 31px; font-variant-numeric: tabular-nums; }
.c-id { width: 43px; }
.c-text { width: 182px; }
.c-user { width: 156px; }
.c-date { width: 352px; }
.page form { padding: 1px 0; }
.delete {
  height: 50px;
  padding: 0 14px;
  border: 2px solid #8a8a8a;
  border-radius: 5px;
  background: #f4f4f4;
  color: #000;
  font-size: 27px;
}

/* script dialog */
.dialog {
  position: absolute;
  top: 0;
  left: 50%;
  margin-left: -359px;
  width: 800px;
  border-radius: 0 0 6px 6px;
  overflow: hidden;
  background: #33333c;
  box-shadow: 0 4px 36px rgba(0, 0, 0, .45);
  clip-path: inset(0 -60px -60px -60px);
}
.dialog-body { height: 213px; padding: 25px 36px 0; border-bottom: 2px solid #292932; }
.dialog h1 { margin: 0; font-size: 30px; line-height: 40px; font-weight: 600; }
.dialog h1 span { font-weight: 400; }
.dialog p { margin: 36px 0 0; font-size: 26px; line-height: 33px; }
.dialog footer { background: var(--chrome); display: flex; justify-content: flex-end; align-items: center; gap: 10px; padding: 22px 36px; }
.dialog footer button {
  width: 205px;
  height: 56px;
  padding-bottom: 2px;
  border: 2px solid var(--line);
  border-radius: 12px;
  background: linear-gradient(#373740, #2f2f38);
  font-size: 26px;
}
.dialog footer .ok { width: 116px; height: 60px; border: 4px solid #6f92f5; color: #6f92f5; font-size: 25px; }
```
